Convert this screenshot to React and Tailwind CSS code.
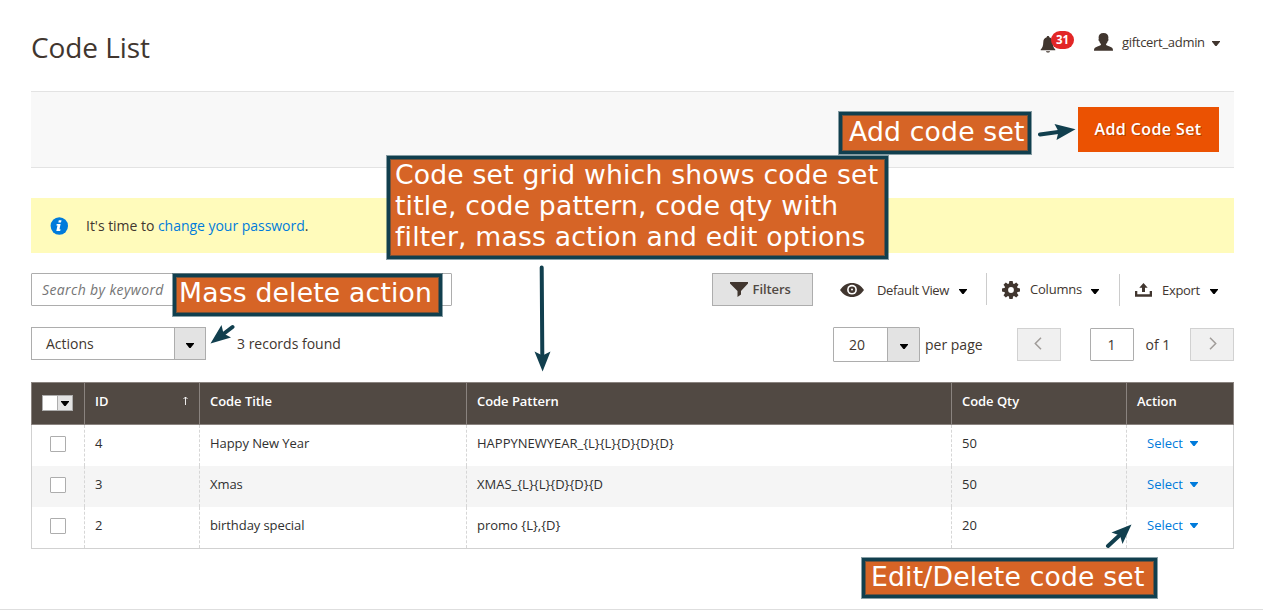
import React from "react";

const Caret = ({ className = "" }) => (
  <svg className={`h-[5px] w-2 shrink-0 ${className}`} viewBox="0 0 8 5" fill="currentColor">
    <path d="M0 0h8v.8L4.6 5H3.4L0 .8z" />
  </svg>
);

const Callout = ({ className, children }) => (
  <div
    className={`absolute whitespace-pre border-[3px] border-[#113f4e] bg-[#d66426] font-['DejaVu_Sans',sans-serif] text-[26.67px] leading-[31px] tracking-[0.17px] text-white shadow-[0_0_0_1px_rgba(17,63,78,0.5),inset_0_0_0_1px_rgba(17,63,78,0.5)] ${className}`}
  >
    {children}
  </div>
);

const rows = [
  { id: "4", title: "Happy New Year", pattern: "HAPPYNEWYEAR_{L}{L}{D}{D}{D}", qty: "50" },
  { id: "3", title: "Xmas", pattern: "XMAS_{L}{L}{D}{D}{D", qty: "50" },
  { id: "2", title: "birthday special", pattern: "promo {L},{D}", qty: "20" },
];

const BellIcon = () => (
  <svg className="mt-[36px] h-[17px] w-4 shrink-0" viewBox="0 0 16 17" fill="#41362f">
    <path d="M6.7 1.2C6.7.4 7.2 0 8 0s1.3.4 1.3 1.2c2.3.6 3.300 2.400 3.400 4.800.1 4.200 1 5.800 2.600 7.400V14.200H.7v-.8C2.300 11.800 3.200 10.200 3.300 6c.1-2.400 1.100-4.200 3.400-4.800zM6 15.200h4c-.2 1-1 1.300-2 1.300s-1.800-.3-2-1.300z" />
  </svg>
);

const UserIcon = () => (
  <svg className="h-[18px] w-[19px] shrink-0" viewBox="0 0 19 18" fill="#41362f">
    <path d="M9.500 0c3.200 0 5 1.900 4.900 4.600 0 .5-.1.900-.2 1.300.5.2.4 1.600-.4 2.200-.3 1.300-.9 2.300-1.700 3v1c1 .9 3 1.300 5 2.200 1.500.6 1.900 1.600 1.900 3.400H0c0-1.800.4-2.800 1.900-3.400 2-.9 4-1.300 5-2.200v-1c-.8-.7-1.400-1.700-1.700-3-.8-.6-.9-2-.4-2.200-.1-.4-.2-.8-.2-1.300C4.500 1.900 6.300 0 9.500 0z" />
  </svg>
);

const FunnelIcon = () => (
  <svg className="h-[15px] w-[18px] shrink-0" viewBox="0 0 18 15" fill="#41362f">
    <path d="M0 0h18v1.500L11 9v3.500L7.500 15V9L0 1.500z" />
  </svg>
);

const EyeIcon = () => (
  <svg className="h-[14px] w-6 shrink-0" viewBox="0 0 24 14">
    <path d="M0 7C3 2.500 7.200 0 12 0s9 2.500 12 7c-3 4.500-7.200 7-12 7S3 11.500 0 7z" fill="#41362f" />
    <circle cx="12" cy="6.700" r="4.900" fill="#fff" />
    <circle cx="12" cy="6.700" r="3.300" fill="#41362f" />
    <circle cx="12" cy="6.500" r="1" fill="#fff" />
  </svg>
);

const GearIcon = () => (
  <svg className="h-[18px] w-[18px] shrink-0" viewBox="-9 -9 18 18">
    <g fill="#41362f">
      {[0, 45, 90, 135].map((a) => (
        <path key={a} d="M-2.200-6L-1.600-9h3.200l.6 3v12l-.6 3h-3.200l-.6-3z" transform={`rotate(${a})`} />
      ))}
      <circle r="6.700" />
    </g>
    <circle r="2.900" fill="#fff" />
  </svg>
);

const ExportIcon = () => (
  <svg className="h-[14px] w-[17px] shrink-0" viewBox="0 0 17 14" fill="#41362f">
    <path d="M8.500 0l4.200 4.700H10V9H7V4.700H4.300zM0 8h2.300v3.200h12.400V8H17v5.700H0z" />
  </svg>
);

const Divider = () => <div className="h-8 w-px bg-[#ccc]" />;

const cell = "border-l border-dashed border-[#d6d6d6] pl-[10px]";
const head = "border-l border-[#8a837f] pl-[10px]";
const columns = "grid grid-cols-[52px_115px_267px_485px_175px_107px]";

export default function App() {
  return (
    <div className="relative h-[611px] w-[1263px] overflow-hidden bg-white px-[31px] pr-[29px] font-['Open_Sans',sans-serif] text-[14px] text-[#41362f]">
      <header className="flex h-[91px] items-start">
        <h1 className="mt-[28px] text-[28px] leading-[38px] tracking-[-0.08px]">Code List</h1>
        <div className="ml-auto flex items-start pr-[14px]">
          <BellIcon />
          <span className="-ml-[5px] mt-[31px] flex h-[18px] w-[23px] items-center justify-center rounded-full bg-[#e22626] text-[11.5px] font-bold leading-[18px] text-white">
            31
          </span>
          <div className="ml-5 mt-[33px] flex h-[18px] items-center text-[13px]">
            <UserIcon />
            <span className="ml-[9px] w-[90px] whitespace-nowrap leading-[18px] tracking-[-0.3px]">giftcert_admin</span>
            <Caret className="mt-[2px]" />
          </div>
        </div>
      </header>

      <section className="flex h-[77px] items-center justify-end border-y border-[#e3e3e3] bg-[#f8f8f8] pr-[15px]">
        <button className="h-[45px] w-[141px] bg-[#eb5202] pb-[2px] pr-px text-[16px] font-semibold tracking-[0.4px] text-white [text-shadow:1px_1px_0_rgba(0,0,0,0.25)]">
          Add Code Set
        </button>
      </section>

      <section className="mt-[30px] flex h-[55px] items-center bg-[#fffbbb] pl-[19px]">
        <svg className="mr-[18px] h-[18px] w-[18px]" viewBox="0 0 18 18">
          <circle cx="9.300" cy="9" r="8.700" fill="#007bdb" />
          <path d="M8.800 3.200h2.700l-.5 2.300H8.300zM6.700 7h3.900l-1.100 5.300h1l-.3 1.600H6.300l1.200-5.400H6.400z" fill="#fff" />
        </svg>
        <span className="tracking-[-0.03px]">
          It's time to <a className="text-[#007bdb]">change your password</a>.
        </span>
      </section>

      <section className="mt-5 flex h-[33px]">
        <div className="flex w-[421px] items-center rounded-[1px] border border-[#adadad] pl-[10px] italic tracking-[0.37px] text-[#757575]">
          Search by keyword
        </div>
        <button className="ml-[260px] flex w-[101px] items-center border border-[#adadad] bg-[#e3e3e3] pl-[17px] text-[13px] font-semibold text-[#514943]">
          <FunnelIcon />
          <span className="ml-[4.5px] tracking-[-0.05px]">Filters</span>
        </button>
        <div className="ml-[27px] flex items-center text-[13px]">
          <EyeIcon />
          <span className="ml-[13px] mt-[2px] w-[82px] whitespace-nowrap tracking-[-0.33px]">Default View</span>
          <Caret className="mt-[4px] text-black" />
          <div className="-mt-px ml-[19px]"><Divider /></div>
          <div className="ml-[15px]"><GearIcon /></div>
          <span className="ml-[10px] w-[61px] whitespace-nowrap tracking-[-0.2px]">Columns</span>
          <Caret className="mt-[4px] text-black" />
          <div className="ml-5"><Divider /></div>
          <div className="ml-[15px]"><ExportIcon /></div>
          <span className="ml-[10px] mt-[2px] w-[48px] whitespace-nowrap tracking-[-0.3px]">Export</span>
          <Caret className="mt-[4px] text-black" />
        </div>
      </section>

      <section className="mt-[21px] flex h-[33px] items-start">
        <div className="flex h-[33px] w-[175px] border border-[#adadad]">
          <span className="flex-1 pl-[14px] leading-[32px]">Actions</span>
          <span className="flex w-[31px] items-center justify-center border-l border-[#adadad] bg-[#e3e3e3] text-black"><Caret className="mt-[3px]" /></span>
        </div>
        <span className="ml-[31px] leading-[34px]">3 records found</span>
        <div className="ml-auto flex items-start">
          <div className="flex h-[35px] w-[87px] rounded-[1px] border border-[#adadad]">
            <span className="flex-1 pl-[15px] leading-[33px]">20</span>
            <span className="flex w-[32px] items-center justify-center border-l border-[#adadad] bg-[#e3e3e3] text-black"><Caret className="mt-[3px]" /></span>
          </div>
          <span className="ml-[5px] w-[92px] leading-[36px]">per page</span>
          <button className="mt-px flex h-[33px] w-[44px] items-center justify-center border border-[#d1d1d1] bg-[#f0f0f0]">
            <svg className="-ml-[2px] -mt-[2px] h-[13px] w-2" viewBox="0 0 8 13" fill="none" stroke="#a09c99" strokeWidth="1.500"><path d="M7 .8L1.300 6.500 7 12.200" /></svg>
          </button>
          <span className="ml-[29px] mt-px h-[33px] w-[44px] rounded-[1px] border border-[#adadad] pr-px text-center leading-[32px]">1</span>
          <span className="ml-[11.5px] w-[44.5px] leading-[36px]">of 1</span>
          <button className="mt-px flex h-[33px] w-[44px] items-center justify-center border border-[#d1d1d1] bg-[#f0f0f0]">
            <svg className="-mt-[2px] ml-[2px] h-[13px] w-2" viewBox="0 0 8 13" fill="none" stroke="#a09c99" strokeWidth="1.500"><path d="M1 .8l5.700 5.700L1 12.200" /></svg>
          </button>
        </div>
      </section>

      <section className="mt-[22px] text-[13px] text-[#303030]">
        <div className={`${columns} h-[43px] border border-[#8a837f] bg-[#514943] font-semibold leading-[37px] tracking-[-0.05px] text-white`}>
          <div className="pl-[10px] pt-[12px]">
            <div className="flex h-4 w-[31px] border border-[#adadad] bg-white">
              <span className="ml-auto flex w-[15px] items-center justify-center border-l border-[#adadad] bg-[#e3e3e3] text-black"><Caret className="mt-px" /></span>
            </div>
          </div>
          <div className={`${head} flex justify-between pr-[11px]`}>
            <span>ID</span>
            <svg className="mt-[13px] h-[9px] w-[5px]" viewBox="0 0 5 9" fill="none" stroke="#fff" strokeWidth=".9"><path d="M2.500 9V1M.5 3l2-2 2 2" /></svg>
          </div>
          <div className={head}>Code Title</div>
          <div className={head}>Code Pattern</div>
          <div className={head}>Code Qty</div>
          <div className={head}>Action</div>
        </div>
        <div className="border border-t-0 border-[#d1d1d1]">
          {rows.map((row) => (
            <div key={row.id} className={`${columns} h-[41px] leading-[37px] even:bg-[#f5f5f5]`}>
              <div className="pl-[18px] pt-[11px]"><div className="h-4 w-4 rounded-[1px] border border-[#adadad] bg-white" /></div>
              <div className={cell}>{row.id}</div>
              <div className={`${cell} tracking-[-0.08px]`}>{row.title}</div>
              <div className={cell}>{row.pattern}</div>
              <div className={cell}>{row.qty}</div>
              <div className={`${cell} flex text-[#007bdb]`}>
                <span className="ml-[10px] w-[43px]">Select</span>
                <Caret className="mt-[16px]" />
              </div>
            </div>
          ))}
        </div>
      </section>

      <div className="-mx-[31px] mt-[60px] h-px bg-[#dedede]" />

      <Callout className="left-[839px] top-[112px] h-[42px] w-[192px] pl-[7px] pt-px">Add code set</Callout>
      <Callout className="left-[387px] top-[156px] h-[103px] w-[501px] pl-[5px]">
        {"Code set grid which shows code set\ntitle, code pattern, code qty with\nfilter, mass action and edit options"}
      </Callout>
      <Callout className="left-[173px] top-[274px] h-[42px] w-[269px] pl-[3px]">Mass delete action</Callout>
      <Callout className="left-[862px] top-[558px] h-[40px] w-[295px] pl-[6px]">Edit/Delete code set</Callout>

      <svg className="pointer-events-none absolute left-0 top-0 h-[611px] w-[1263px]" viewBox="0 0 1263 611" fill="#113f4e" stroke="#113f4e" strokeWidth="4" strokeLinecap="round">
        <path d="M1040 134.500L1060 131.700M541.700 267.500L542.300 355M232.500 327L222 335M1108 546L1121 534" />
        <g stroke="none">
          <path d="M1075.500 129.300L1054.500 124l4 7.500-2 8.500z" />
          <path d="M542.600 371.500L534.500 351.500l8 4 8-4z" />
          <path d="M210.500 343.500L221.500 325l2 8.500 7.500 4z" />
          <path d="M1131.500 524.500L1111.500 532.500l8.500 3 2.500 8.500z" />
        </g>
      </svg>
    </div>
  );
}
